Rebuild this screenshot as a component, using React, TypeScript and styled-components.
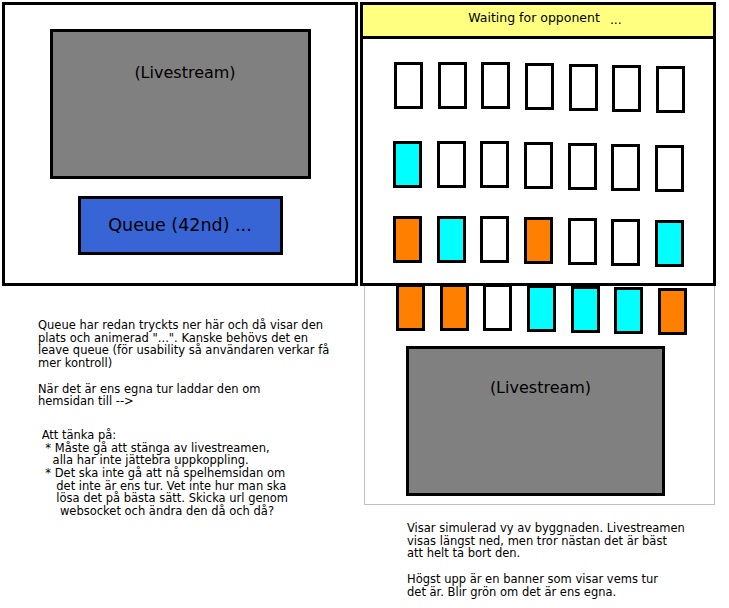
import React from 'react';
import styled, { createGlobalStyle } from 'styled-components';

const GlobalStyle = createGlobalStyle`
  * { box-sizing: border-box; }
  body {
    margin: 0;
    background: #ffffff;
    color: #000000;
    font-family: "DejaVu Sans", "Liberation Sans", sans-serif;
  }
`;

type Fill = 'white' | 'cyan' | 'orange';

const fills: Record<Fill, string> = {
  white: '#ffffff',
  cyan: '#00ffff',
  orange: '#ff8000',
};

const Page = styled.div`
  display: flex;
  gap: 2px;
  padding: 2px 0 0 2px;
  width: 729px;
  height: 608px;
  overflow: hidden;
`;

const Column = styled.div`
  display: flex;
  flex-direction: column;
  width: 356px;
  flex: none;
`;

/* vänster sida: kön */
const QueuePanel = styled.div`
  width: 356px;
  height: 284px;
  border: 3px solid #000;
  padding-top: 24px;
  display: flex;
  flex-direction: column;
  align-items: center;
  gap: 17px;
`;

const Stream = styled.div<{ $w: number; $textTop: number }>`
  width: ${(p) => p.$w}px;
  height: 150px;
  flex: none;
  background: #808080;
  border: 3px solid #000;
  padding: ${(p) => p.$textTop}px 0 0 10px;
  text-align: center;
  font-size: 16px;
  line-height: normal;
`;

const QueueButton = styled.div`
  width: 205px;
  height: 59px;
  background: #3865d5;
  border: 3px solid #000;
  display: flex;
  align-items: center;
  justify-content: center;
  font-size: 17.5px;
  padding-bottom: 2px;
`;

const Note = styled.div<{ $top: number; $left: number }>`
  margin-top: ${(p) => p.$top}px;
  padding-left: ${(p) => p.$left}px;
  white-space: pre;
  font-size: 11.5px;
  line-height: 12.7px;
`;

/* höger sida: byggnaden */
const Tower = styled.div`
  position: relative;
  z-index: 1;
  width: 356px;
  height: 284px;
  border: 3px solid #000;
  background: transparent;
`;

const Banner = styled.div`
  height: 34px;
  background: #ffff80;
  border-bottom: 3px solid #000;
  padding: 5px 0 0 14px;
  text-align: center;
  font-size: 12.5px;
  line-height: normal;
`;

const Dots = styled.span`
  margin-left: 10px;
  position: relative;
  top: 2px;
`;

const WindowRow = styled.div<{ $top: number; $left: number }>`
  display: flex;
  align-items: flex-start;
  gap: 14.7px;
  height: 51px;
  margin-top: ${(p) => p.$top}px;
  padding-left: ${(p) => p.$left}px;
`;

const Window = styled.div<{ $fill: Fill; $drop: number }>`
  width: 29px;
  height: 47px;
  flex: none;
  margin-top: ${(p) => p.$drop}px;
  border: 3px solid #000;
  background: ${(p) => fills[p.$fill]};
`;

const Lower = styled.div`
  width: 351px;
  margin: -2px 0 0 4px;
  border: 1px solid #c0c0c0;
  border-top: none;
  padding-bottom: 8px;
`;

const StreamSlot = styled.div`
  margin: 11px 0 0 41px;
`;

const drops = [0, 0, 0, 1, 2, 3, 4];

const floors: { fills: Fill[]; top: number; left: number }[] = [
  { fills: ['white', 'white', 'white', 'white', 'white', 'white', 'white'], top: 23, left: 31 },
  { fills: ['cyan', 'white', 'white', 'white', 'white', 'white', 'white'], top: 27.5, left: 30 },
  { fills: ['orange', 'cyan', 'white', 'orange', 'white', 'white', 'cyan'], top: 24.2, left: 30 },
];

const groundFloor: Fill[] = ['orange', 'orange', 'white', 'cyan', 'cyan', 'cyan', 'orange'];

const queueNote = `Queue har redan tryckts ner här och då visar den
plats och animerad "...". Kanske behövs det en
leave queue (för usability så användaren verkar få
mer kontroll)

När det är ens egna tur laddar den om
hemsidan till -->`;

const thinkNote = ` Att tänka på:
  * Måste gå att stänga av livestreamen,
    alla har inte jättebra uppkoppling.
  * Det ska inte gå att nå spelhemsidan om
     det inte är ens tur. Vet inte hur man ska
     lösa det på bästa sätt. Skicka url genom
      websocket och ändra den då och då?`;

const buildingNote = `Visar simulerad vy av byggnaden. Livestreamen
visas längst ned, men tror nästan det är bäst
att helt ta bort den.

Högst upp är en banner som visar vems tur
det är. Blir grön om det är ens egna.`;

const App: React.FC = () => {
  return (
    <>
      <GlobalStyle />
      <Page>
        <Column>
          <QueuePanel>
            <Stream $w={261} $textTop={31}>(Livestream)</Stream>
            <QueueButton>Queue (42nd) ...</QueueButton>
          </QueuePanel>
          <Note $top={33} $left={36}>{queueNote}</Note>
          <Note $top={21} $left={36}>{thinkNote}</Note>
        </Column>

        <Column>
          <Tower>
            <Banner>
              Waiting for opponent<Dots>...</Dots>
            </Banner>
            {floors.map((floor, i) => (
              <WindowRow key={i} $top={floor.top} $left={floor.left}>
                {floor.fills.map((f, j) => (
                  <Window key={j} $fill={f} $drop={drops[j]} />
                ))}
              </WindowRow>
            ))}
          </Tower>
          <Lower>
            <WindowRow $top={0} $left={31}>
              {groundFloor.map((f, j) => (
                <Window key={j} $fill={f} $drop={drops[j]} />
              ))}
            </WindowRow>
            <StreamSlot>
              <Stream $w={259} $textTop={29}>(Livestream)</Stream>
            </StreamSlot>
          </Lower>
          <Note $top={17} $left={47}>{buildingNote}</Note>
        </Column>
      </Page>
    </>
  );
};

export default App;
